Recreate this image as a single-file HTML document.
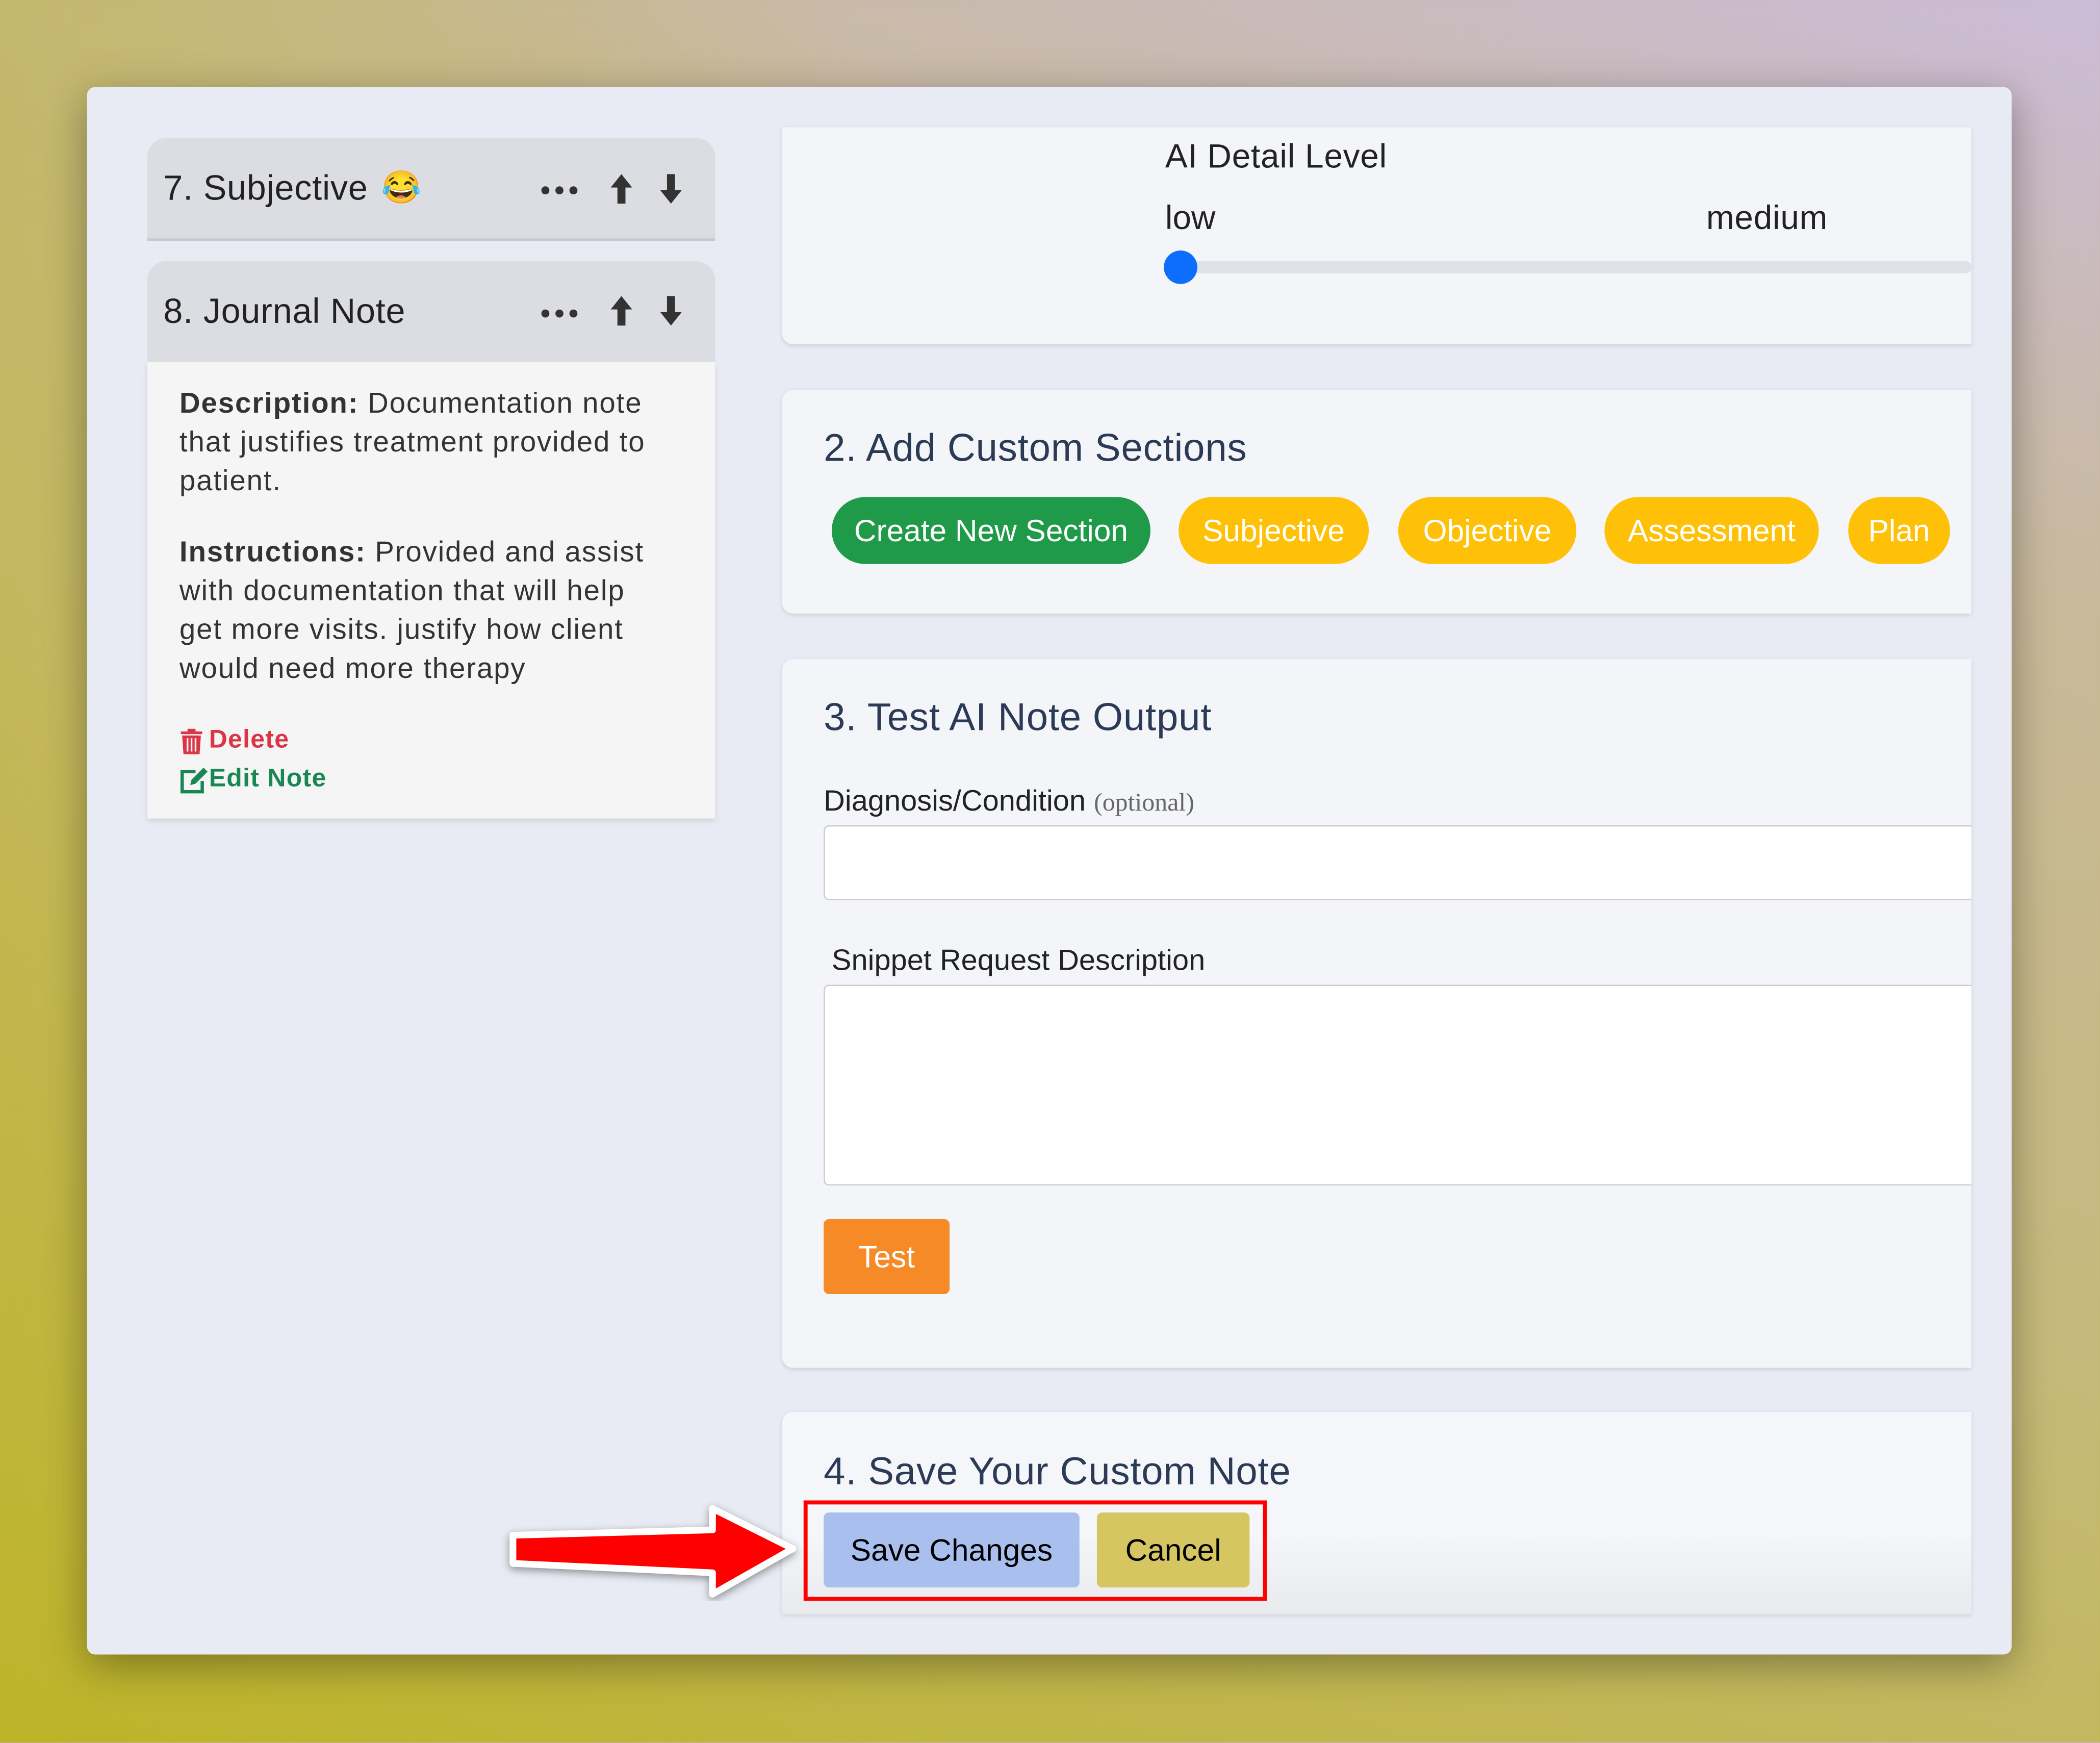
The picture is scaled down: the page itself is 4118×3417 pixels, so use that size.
<!DOCTYPE html>
<html><head><meta charset="utf-8"><style>
*{margin:0;padding:0;box-sizing:border-box}
html,body{width:4118px;height:3416px;overflow:hidden}
body{background:linear-gradient(200deg,#cbbcd9 0%,#c8b99a 25%,#c6b97a 55%,#bdb42a 100%);font-family:"Liberation Sans",sans-serif}
#bg2{position:absolute;inset:0;background:linear-gradient(90deg,rgba(190,180,40,.35) 0%,rgba(190,180,40,0) 40%)}
#s{position:absolute;left:0;top:0;width:1568px;height:1301px;transform:scale(2.6263);transform-origin:0 0}
.a{position:absolute}
.win{left:65px;top:65px;width:1437px;height:1170px;background:#e8ebf3;border-radius:6px;box-shadow:0 8px 30px rgba(0,0,0,.35)}
.hdr{background:#dcdde2;border-radius:14px 14px 0 0;font-size:26px;color:#222;padding-left:12px;display:flex;align-items:center;letter-spacing:.3px}
.dots{position:absolute;font-size:14px;color:#333;letter-spacing:2px}
.panel{background:#f3f5f9;border-radius:8px 0 0 8px;box-shadow:0 1px 3px rgba(0,0,0,.12)}
.h2{font-size:29px;color:#2b3a55;letter-spacing:.3px}
.pill{position:absolute;top:371px;height:50px;border-radius:25px;color:#fff;font-size:23px;display:flex;align-items:center;justify-content:center;background:#ffc107}
.lbl{font-size:22px;color:#222}
.body{font-size:21.5px;color:#333;line-height:29px;letter-spacing:.7px}
</style></head><body><div id="bg2"></div>
<div id="s">
<div class="a win"></div>
<div class="a hdr" style="left:110px;top:103px;width:424px;height:77px;border-bottom:2px solid #c8c9ce">7. Subjective <span style="margin-left:10px;font-size:24px">😂</span></div>
<div class="dots" style="left:403px;top:133px">●●●</div>
<svg class="a" style="left:454px;top:128px" width="60" height="26" viewBox="0 0 60 26"><path d="M10 2 L2 12 H7 V24 H13 V12 H18 Z" fill="#333"/><path d="M47 24 L39 14 H44 V2 H50 V14 H55 Z" fill="#333"/></svg>
<div class="a hdr" style="left:110px;top:195px;width:424px;height:75px">8. Journal Note</div>
<div class="dots" style="left:403px;top:225px">●●●</div>
<svg class="a" style="left:454px;top:219px" width="60" height="26" viewBox="0 0 60 26"><path d="M10 2 L2 12 H7 V24 H13 V12 H18 Z" fill="#333"/><path d="M47 24 L39 14 H44 V2 H50 V14 H55 Z" fill="#333"/></svg>
<div class="a body" style="left:110px;top:270px;width:424px;height:341px;background:#f5f5f5;padding:17px 36px 17px 24px;box-shadow:0 2px 4px rgba(0,0,0,.1)">
<p><b>Description:</b> Documentation note that justifies treatment provided to patient.</p>
<p style="margin-top:24px"><b>Instructions:</b> Provided and assist with documentation that will help get more visits. justify how client would need more therapy</p>
</div>
<svg class="a" style="left:134px;top:543px" width="18" height="20" viewBox="0 0 18 20"><path d="M6 1h6v2h5v2H1V3h5z M2 6h14l-1 14H3z" fill="#dc3545"/><path d="M6 8v10M9 8v10M12 8v10" stroke="#f5f5f5" stroke-width="1.3"/></svg>
<div class="a" style="left:156px;top:542px;color:#dc3545;font-weight:bold;font-size:19px;letter-spacing:.5px">Delete</div>
<svg class="a" style="left:134px;top:572px" width="22" height="21" viewBox="0 0 22 21"><path d="M12 4H2v15h15v-8" fill="none" stroke="#198754" stroke-width="2.5"/><path d="M8 14l1-4 9-9 3 3-9 9z" fill="#198754"/></svg>
<div class="a" style="left:156px;top:571px;color:#198754;font-weight:bold;font-size:19px;letter-spacing:.5px">Edit Note</div>
<div class="a panel" style="left:584px;top:95px;width:888px;height:162px;border-radius:0 0 0 8px"></div>
<div class="a lbl" style="left:870px;top:103px;font-size:25px;letter-spacing:.3px">AI Detail Level</div>
<div class="a lbl" style="left:870px;top:149px;font-size:25px">low</div>
<div class="a lbl" style="left:1274px;top:149px;font-size:25px;letter-spacing:.3px">medium</div>
<div class="a" style="left:870px;top:195px;width:602px;height:9px;background:#dee2e6;border-radius:4px"></div>
<div class="a" style="left:869px;top:187px;width:25px;height:25px;border-radius:50%;background:#0d6efd"></div>
<div class="a panel" style="left:584px;top:291px;width:888px;height:167px"></div>
<div class="a h2" style="left:615px;top:319px">2. Add Custom Sections</div>
<div class="pill" style="left:621px;width:238px;background:#1f9a48">Create New Section</div>
<div class="pill" style="left:880px;width:142px">Subjective</div>
<div class="pill" style="left:1044px;width:133px">Objective</div>
<div class="pill" style="left:1198px;width:160px">Assessment</div>
<div class="pill" style="left:1380px;width:76px">Plan</div>
<div class="a panel" style="left:584px;top:492px;width:888px;height:529px"></div>
<div class="a h2" style="left:615px;top:520px">3. Test AI Note Output</div>
<div class="a lbl" style="left:615px;top:585px">Diagnosis/Condition <span style="font-family:'Liberation Serif',serif;color:#666;font-size:19px">(optional)</span></div>
<div class="a" style="left:615px;top:616px;width:857px;height:56px;background:#fff;border:1px solid #ccc;border-right:none;border-radius:4px 0 0 4px"></div>
<div class="a lbl" style="left:621px;top:704px">Snippet Request Description</div>
<div class="a" style="left:615px;top:735px;width:857px;height:150px;background:#fff;border:1px solid #ccc;border-right:none;border-radius:4px 0 0 4px"></div>
<div class="a" style="left:615px;top:910px;width:94px;height:56px;background:#f58a26;border-radius:4px;color:#fff;font-size:23px;display:flex;align-items:center;justify-content:center">Test</div>
<div class="a panel" style="left:584px;top:1054px;width:888px;height:151px;border-radius:8px 0 0 0;background:linear-gradient(#f4f6fa 60%,#e9eaee)"></div>
<div class="a h2" style="left:615px;top:1083px">4. Save Your Custom Note</div>
<div class="a" style="left:600px;top:1120px;width:346px;height:75px;border:3px solid #f00"></div>
<div class="a" style="left:615px;top:1129px;width:191px;height:56px;background:#a9c0ee;border-radius:4px;font-size:23px;color:#000;display:flex;align-items:center;justify-content:center">Save Changes</div>
<div class="a" style="left:819px;top:1129px;width:114px;height:56px;background:#d6c661;border-radius:4px;font-size:23px;color:#000;display:flex;align-items:center;justify-content:center">Cancel</div>
<svg class="a" style="left:370px;top:1120px" width="230" height="75" viewBox="0 0 230 75"><path d="M13 26 L162 22 L162 6 L222 36 L162 70 L162 54 L13 47 Z" fill="#f00" stroke="#fff" stroke-width="5" stroke-linejoin="round" style="filter:drop-shadow(0 2px 3px rgba(0,0,0,.4))"/></svg>
</div>
</body></html>
